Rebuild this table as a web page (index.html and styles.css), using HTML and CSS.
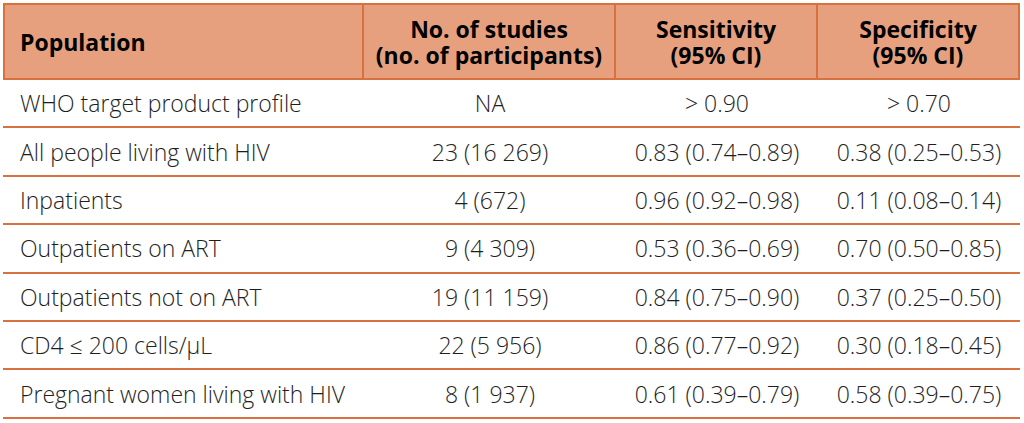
FILE: index.html
```html
<!DOCTYPE html>
<html lang="en">
<head>
<meta charset="utf-8">
<title>Population table</title>
<link rel="stylesheet" href="styles.css">
</head>
<body>
<div class="wrap">
<table class="tbl">
  <colgroup>
    <col class="c1"><col class="c2"><col class="c3"><col class="c4">
  </colgroup>
  <thead>
    <tr>
      <th class="left">Population</th>
      <th><span class="hl">No. of studies</span><span class="hl">(no. of participants)</span></th>
      <th><span class="hl">Sensitivity</span><span class="hl">(95% CI)</span></th>
      <th><span class="hl">Specificity</span><span class="hl">(95% CI)</span></th>
    </tr>
  </thead>
  <tbody>
    <tr><td class="left">WHO target product profile</td><td>NA</td><td>&gt; 0.90</td><td>&gt; 0.70</td></tr>
    <tr><td class="left">All people living with HIV</td><td>23 (16 269)</td><td>0.83 (0.74–0.89)</td><td>0.38 (0.25–0.53)</td></tr>
    <tr><td class="left">Inpatients</td><td>4 (672)</td><td>0.96 (0.92–0.98)</td><td>0.11 (0.08–0.14)</td></tr>
    <tr><td class="left">Outpatients on ART</td><td>9 (4 309)</td><td>0.53 (0.36–0.69)</td><td>0.70 (0.50–0.85)</td></tr>
    <tr><td class="left">Outpatients not on ART</td><td>19 (11 159)</td><td>0.84 (0.75–0.90)</td><td>0.37 (0.25–0.50)</td></tr>
    <tr><td class="left">CD4 ≤ 200 cells/µL</td><td>22 (5 956)</td><td>0.86 (0.77–0.92)</td><td>0.30 (0.18–0.45)</td></tr>
    <tr><td class="left">Pregnant women living with HIV</td><td>8 (1 937)</td><td>0.61 (0.39–0.79)</td><td>0.58 (0.39–0.75)</td></tr>
  </tbody>
</table>
</div>
</body>
</html>
```
FILE: styles.css
```css
html, body {
  margin: 0;
  padding: 0;
  background: #ffffff;
}
.wrap {
  padding: 3px 0 0 3px;
}
.tbl {
  border-collapse: separate;
  border-spacing: 0;
  width: 1017px;
  table-layout: fixed;
  font-family: "Open Sans", "Noto Sans", sans-serif;
}
.c1 { width: 361px; }
.c2 { width: 252px; }
.c3 { width: 202px; }
.c4 { width: 202px; }
.tbl th {
  background: #e6a07e;
  color: #000;
  font-weight: 700;
  font-size: 23px;
  line-height: 26px;
  height: 73px;
  padding: 0;
  text-align: center;
  vertical-align: middle;
  border-top: 2px solid #d8703f;
  border-bottom: 2px solid #d8703f;
  border-right: 2px solid #d8703f;
}
.tbl th:first-child {
  border-left: 2px solid #d8703f;
}
.tbl th.left {
  text-align: left;
  padding-left: 15px;
}
.hl {
  display: block;
  white-space: nowrap;
}
.tbl td {
  font-size: 23px;
  font-weight: 300;
  color: #1e1e1e;
  height: 46.4px;
  padding: 0;
  text-align: center;
  vertical-align: middle;
  border-bottom: 2px solid #d8703f;
}
.tbl td.left {
  text-align: left;
  padding-left: 17px;
}
```
